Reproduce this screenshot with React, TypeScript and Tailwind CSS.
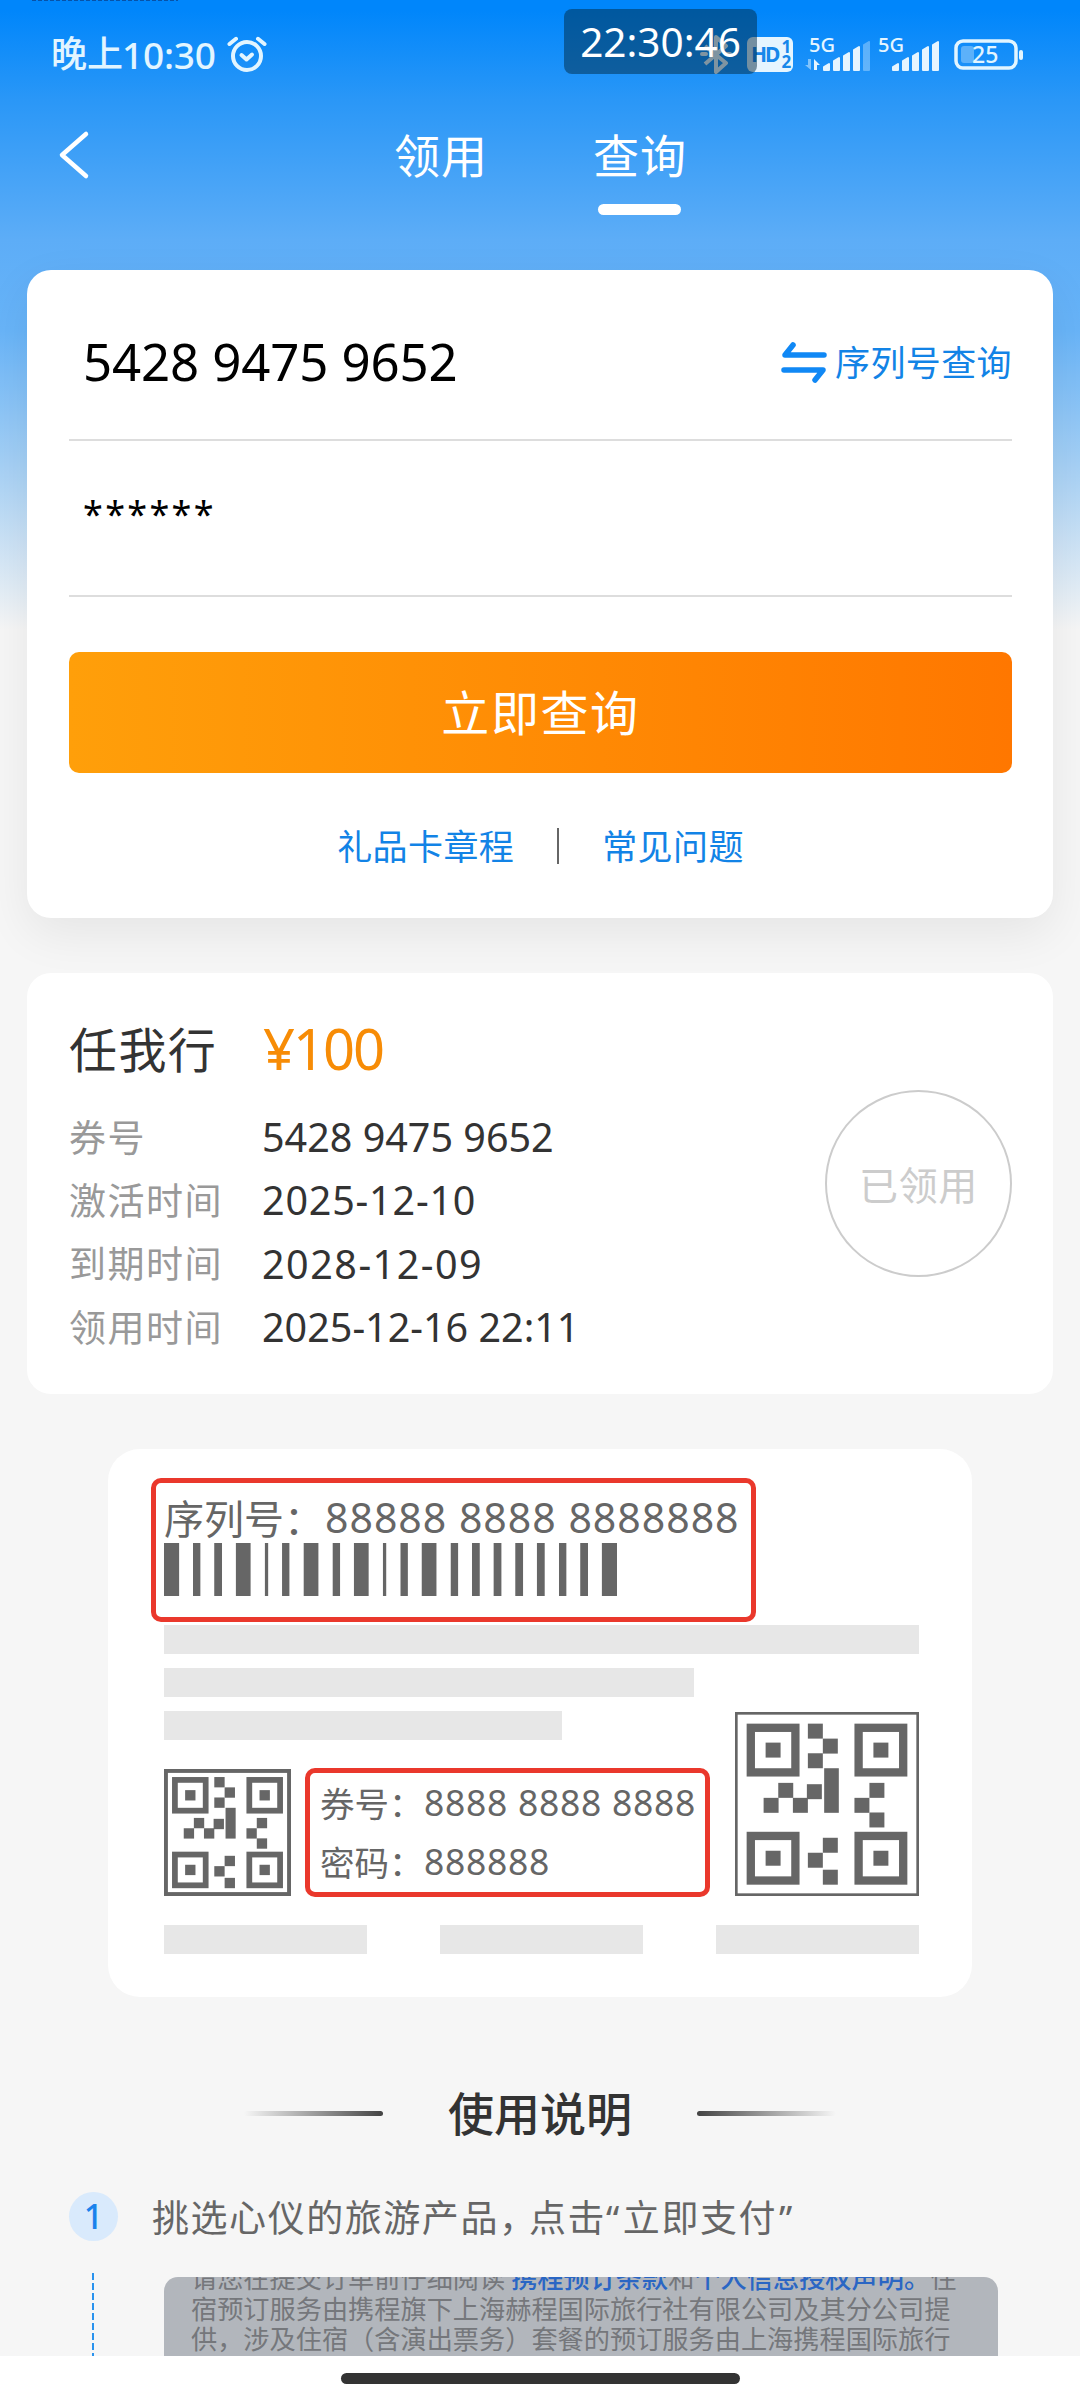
import { Fragment } from "react";

const SANS = "font-['Noto_Sans','Noto_Sans_CJK_SC',sans-serif]";
const CJK = "font-['Noto_Sans_CJK_SC',sans-serif]";

const details = [
  { label: "券号", value: "5428 9475 9652", tracking: "tracking-normal" },
  { label: "激活时间", value: "2025-12-10", tracking: "tracking-[.8px]" },
  { label: "到期时间", value: "2028-12-09", tracking: "tracking-[1.5px]" },
  { label: "领用时间", value: "2025-12-16 22:11", tracking: "tracking-normal" },
];

// [x, width] of each bar
const barcode = [
  [0, 37], [71, 18], [123, 19], [176, 36], [247, 8], [289, 18], [342, 36], [413, 18], [465, 36], [536, 8],
  [579, 18], [631, 36], [702, 18], [754, 19], [807, 19], [860, 19], [913, 19], [967, 18], [1019, 19], [1072, 37],
];

const finders = [[35, 35], [359, 35], [35, 360], [359, 360]];

const modules = [
  [219, 35], [264, 80], [219, 124], [130, 213], [86, 258], [174, 258], [216, 217],
  [404, 213], [359, 258], [404, 302], [264, 378], [219, 423], [264, 474],
];

function QrCode({ className, border }: { className: string; border: number }) {
  return (
    <svg className={className} viewBox="0 0 553 553" fill="#666">
      <rect x={border / 2} y={border / 2} width={553 - border} height={553 - border} fill="none" stroke="#666" strokeWidth={border} />
      {finders.map(([x, y]) => (
        <Fragment key={`${x}-${y}`}>
          <rect x={x + 12.5} y={y + 12.5} width="134" height="134" fill="none" stroke="#666" strokeWidth="25" />
          <rect x={x + 57} y={y + 57} width="45" height="45" />
        </Fragment>
      ))}
      {modules.map(([x, y]) => (
        <rect key={`${x}-${y}`} x={x} y={y} width="45" height="45" />
      ))}
      <rect x="268" y="169" width="44" height="134" />
    </svg>
  );
}

function AlarmIcon() {
  return (
    <svg className="w-10 h-9" viewBox="0 0 40 36" fill="none" stroke="#e2f5ff" strokeWidth="4" strokeLinecap="round" strokeLinejoin="round">
      <circle cx="20" cy="20" r="14" />
      <path d="M14.500 19 L19.500 23.500 L25 18.500" />
      <path d="M2.500 8 L9 2.800 M31 2.800 L37.500 8" />
    </svg>
  );
}

function Signal({ data, dim }: { data?: boolean; dim?: boolean }) {
  return (
    <svg className="w-[69px] h-9" viewBox="0 0 69 36" fill="#e6f5ff" stroke="#e6f5ff" strokeLinejoin="round">
      <text x="5" y="16" fontSize="20" fontWeight="500" fontFamily="Noto Sans" textLength="26" stroke="none">5G</text>
      {data && <path d="M7 23 V34 L1 29 H4 V23Z" opacity=".5" stroke="none" />}
      {data && <path d="M10 34 V23 L16 29 H13 V34Z" stroke="none" />}
      <g strokeWidth="2">
        <path d="M20 34 V31 L25 28 V34Z M30 34 V25 L35 22 V34Z M40 34 V20 L45 17 V34Z M50 34 V14 L55 11 V34Z" />
        <path d="M60 34 V9 L65 6 V34Z" opacity={dim ? 0.35 : 1} />
      </g>
    </svg>
  );
}

function StatusBar() {
  return (
    <div className="relative h-[108px] shrink-0">
      <div className="absolute left-8 top-0 w-[146px] h-px bg-[repeating-linear-gradient(to_right,#0752a8_0_4px,#0086fb_4px_6px)]" />
      <div className="flex items-center pl-[51px] pt-[35px] h-[73px]">
        <span className={`${SANS} flex items-center text-[37px] leading-none font-medium text-[#e2f5ff] w-[176px] whitespace-nowrap`}>
          <span className="text-[36px]">晚上</span>
          <span className="tracking-[-.2px] -ml-px">10:30</span>
        </span>
        <AlarmIcon />
        <div className="flex items-center ml-auto mr-[56px]">
          <svg className="w-8 h-10 mr-[15px]" viewBox="0 0 32 40" fill="none" stroke="#fff" strokeWidth="4">
            <path d="M5 12 L26 29 L16 38 V3 L26 12 L5 30" strokeLinejoin="round" />
            <path d="M2 20 h4 M26 20 h4" strokeLinecap="round" />
          </svg>
          <div className="flex w-[46px] h-[35px] rounded-md bg-[#e6f5ff] text-[#1787ea] font-['Noto_Sans'] font-bold mr-[11px]">
            <span className="text-[21px] leading-[35px] ml-1 tracking-[-2px]">HD</span>
            <span className="flex flex-col text-[17px] leading-[15px] pt-0.5 ml-[3px]">
              <span>1</span>
              <span>2</span>
            </span>
          </div>
          <Signal data dim />
          <Signal />
          <svg className="w-[70px] h-8 ml-3" viewBox="0 0 70 32">
            <rect x="2" y="3" width="60" height="27" rx="7" fill="none" stroke="#e2f5ff" strokeWidth="3.500" />
            <rect x="7" y="8" width="13" height="17" rx="3" fill="#5cb1fa" />
            <text x="18" y="25" fontSize="23" fontWeight="500" fontFamily="Noto Sans" fill="#e2f5ff">25</text>
            <rect x="65" y="12" width="4" height="10" rx="2" fill="#e2f5ff" />
          </svg>
        </div>
      </div>
      <div className="absolute left-[564px] top-[9px] w-[193px] h-[65px] rounded-lg bg-[#002a44]/50 text-center text-white font-['Noto_Sans'] text-[40.500px] leading-[65px]">
        22:30:46
      </div>
    </div>
  );
}

function Tabs() {
  return (
    <nav className="flex h-[162px] text-white text-[46px] leading-[60px] tracking-[1px]">
      <svg className="w-8 h-[50px] mt-[22px] ml-[58px] mr-[304px]" viewBox="0 0 32 50" fill="none" stroke="#fff" strokeWidth="4.500" strokeLinecap="round" strokeLinejoin="round">
        <path d="M28 4 L4 25 L28 46" />
      </svg>
      <span className="pt-[17px] w-[199px]">领用</span>
      <div className="pt-[17px]">
        <p>查询</p>
        <div className="h-[11px] w-[83px] rounded-full bg-white ml-[5px] mt-[19px]" />
      </div>
    </nav>
  );
}

function QueryCard() {
  return (
    <section className="mx-[27px] h-[648px] rounded-3xl bg-white pl-[42px] pr-[41px] shadow-[0_16px_48px_rgba(0,0,0,0.07)]">
      <div className="flex items-center justify-between h-[171px] border-b-2 border-[#ddd] pt-[14px] pl-[14px]">
        <span className="text-[51px] text-black tracking-[-.15px]">5428 9475 9652</span>
        <div className="flex items-center gap-[8px] text-[#1283e6] text-[35px] tracking-[.4px]">
          <svg className="w-[46px] h-[42px]" viewBox="0 0 46 42" fill="none" stroke="#1088f5" strokeWidth="5.500" strokeLinecap="round" strokeLinejoin="round">
            <path d="M43 14 H4 L12 4 M3 29 H42 L34 39" />
          </svg>
          <span className="pt-1">序列号查询</span>
        </div>
      </div>
      <div className="h-[156px] border-b-2 border-[#ddd] pl-[14px] text-black text-[36px] tracking-[2.300px] leading-[146px]">******</div>
      <button className="block w-full h-[121px] mt-[55px] rounded-[10px] bg-linear-to-r from-[#ff9f0a] to-[#ff7700] text-white text-[48px] tracking-[1.600px]">
        立即查询
      </button>
      <div className="flex items-center justify-center h-[36px] mt-[55px] text-[35px] text-[#1283e6] tracking-[.4px]">
        <span className="pt-[3px]">礼品卡章程</span>
        <div className="w-0.5 h-9 bg-[#666] ml-[43px] mr-[43px]" />
        <span className="pt-[3px]">常见问题</span>
      </div>
    </section>
  );
}

function CouponCard() {
  return (
    <section className="flex items-center justify-between mx-[27px] mt-[55px] h-[421px] rounded-3xl bg-white pl-[42px] pr-[41px]">
      <div className="h-full">
        <div className="flex items-center mt-[42px] h-[70px]">
          <h2 className="w-[194px] text-[48px] tracking-[1.400px] text-[#333]">任我行</h2>
          <span className="text-[56px] text-[#f78c06] tracking-[-2px] -mt-1">¥100</span>
        </div>
        <ul className="mt-[21px]">
          {details.map(row => (
            <li key={row.label} className="flex items-center h-[63.300px]">
              <span className="w-[193px] text-[37px] tracking-[1.500px] text-[#999]">{row.label}</span>
              <span className={`text-[39.500px] text-[#333] whitespace-nowrap ${row.tracking}`}>{row.value}</span>
            </li>
          ))}
        </ul>
      </div>
      <div className="w-[187px] h-[187px] rounded-full border-2 border-[#ccc] text-[#ccc] text-[39px] tracking-[.6px] leading-[185px] text-center">已领用</div>
    </section>
  );
}

function SampleCard() {
  return (
    <section className={`${SANS} mx-[108px] mt-[55px] h-[548px] rounded-[32px] bg-white pt-[29px] pl-[56px] text-[#666]`}>
      <div className="w-[605px] h-[144px] -ml-[13px] rounded-[10px] border-[5px] border-[#ea382c] pl-[8px]">
        <div className="flex h-[60px] leading-[69px] whitespace-nowrap">
          <span className={`${CJK} w-[161px] text-[40px]`}>序列号：</span>
          <span className="text-[41px] tracking-[1px]">88888 8888 8888888</span>
        </div>
        <svg className="w-[453px] h-[53px]" viewBox="0 0 1109 160" preserveAspectRatio="none" fill="#666">
          {barcode.map(([x, w]) => (
            <rect key={x} x={x} y="0" width={w} height="160" />
          ))}
        </svg>
      </div>
      <div className="flex justify-between mt-[3px] w-[755px] h-[272px]">
        <div className="flex flex-col">
          <div className="h-[29px] w-[755px] bg-[#e7e7e7]" />
          <div className="h-[29px] w-[530px] bg-[#e7e7e7] mt-[14px]" />
          <div className="h-[29px] w-[398px] bg-[#e7e7e7] mt-[14px]" />
          <div className="flex mt-[28px]">
            <QrCode className="w-[127px] h-[127px] mt-px" border={17} />
            <div className="w-[405px] h-[129px] ml-[14px] rounded-[10px] border-[5px] border-[#ea382c] pl-[10px] leading-[59px]">
              <div className="flex whitespace-nowrap">
                <span className={`${CJK} w-[104px] text-[34.500px]`}>券号：</span>
                <span className="text-[35.500px] tracking-[.7px]">8888 8888 8888</span>
              </div>
              <div className="flex whitespace-nowrap">
                <span className={`${CJK} w-[104px] text-[34.500px]`}>密码：</span>
                <span className="text-[35.500px] tracking-[.7px]">888888</span>
              </div>
            </div>
          </div>
        </div>
        <QrCode className="w-[184px] h-[184px] -ml-[184px] mt-[87px] shrink-0" border={8} />
      </div>
      <div className="flex justify-between w-[755px] mt-[28px]">
        <div className="h-[29px] w-[203px] bg-[#e7e7e7]" />
        <div className="h-[29px] w-[203px] bg-[#e7e7e7]" />
        <div className="h-[29px] w-[203px] bg-[#e7e7e7]" />
      </div>
    </section>
  );
}

function Guide() {
  return (
    <section className="h-[359px] overflow-hidden">
      <div className="flex items-center justify-center h-[70px] mt-[81px]">
        <div className="w-[139px] h-[5px] rounded-sm bg-linear-to-r from-transparent to-[#444]" />
        <h2 className="w-[314px] text-center text-[46px] font-medium text-[#333]">使用说明</h2>
        <div className="w-[139px] h-[5px] rounded-sm bg-linear-to-l from-transparent to-[#444]" />
      </div>
      <div className="flex items-center h-[49px] mt-[44px] ml-[69px]">
        <span className="w-[49px] h-[49px] rounded-full bg-[#d9eafc] text-[#1a82ec] text-[34px] leading-[48px] font-medium text-center">1</span>
        <p className="ml-[34px] pt-0.5 text-[37px] tracking-[1.550px] text-[#666] whitespace-nowrap">
          挑选心仪的旅游产品<span className="tracking-[-7px]">，</span>点击<span className="tracking-[3.500px]">“</span>立即支付<span className="ml-0.5">”</span>
        </p>
      </div>
      <div className="flex mt-[32px]">
        <div className="w-[2px] h-[84px] ml-[92px] bg-[repeating-linear-gradient(to_bottom,#2a93ee_0_7px,transparent_7px_10px)]" />
        <div className={`${CJK} w-[834px] h-[100px] ml-[70px] mt-[4px] rounded-t-[14px] overflow-hidden bg-[#b2b6bc] text-[#75777b] text-[26.200px] leading-[30.600px] pl-[27px] whitespace-nowrap`}>
          <div className="-mt-[15px]">
            <p>请您在提交订单前仔细阅读 <b className="font-medium text-[#2a66c4]">携程预订条款</b>和<b className="font-medium text-[#2a66c4]">个人信息授权声明。</b>住</p>
            <p>宿预订服务由携程旗下上海赫程国际旅行社有限公司及其分公司提</p>
            <p>供，涉及住宿（含演出票务）套餐的预订服务由上海携程国际旅行</p>
          </div>
        </div>
      </div>
    </section>
  );
}

function App() {
  return (
    <main className={`${SANS} flex flex-col w-[1080px] h-[2400px] overflow-hidden bg-[#f6f6f6] bg-[linear-gradient(to_bottom,#0086fb_0,#0086fb_10px,#2a97f7_100px,#5dadf7_240px,#68b4f8_330px,#a3cff5_460px,#f6f6f6_630px)]`}>
      <StatusBar />
      <Tabs />
      <QueryCard />
      <CouponCard />
      <SampleCard />
      <Guide />
      <footer className="h-11 bg-white pt-[17px]">
        <div className="mx-auto w-[399px] h-[11px] rounded-full bg-[#333]" />
      </footer>
    </main>
  );
}

export default App;
